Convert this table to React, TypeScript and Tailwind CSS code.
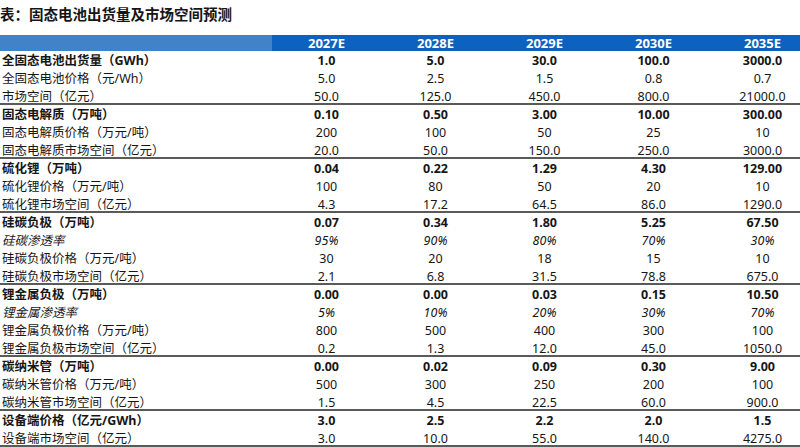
import React from "react";

type Row = { label: string; values: string[]; bold?: boolean; italic?: boolean };

const groups: Row[][] = [
  [
    { label: "全固态电池出货量（GWh）", values: ["1.0", "5.0", "30.0", "100.0", "3000.0"], bold: true },
    { label: "全固态电池价格（元/Wh）", values: ["5.0", "2.5", "1.5", "0.8", "0.7"] },
    { label: "市场空间（亿元）", values: ["50.0", "125.0", "450.0", "800.0", "21000.0"] },
  ],
  [
    { label: "固态电解质（万吨）", values: ["0.10", "0.50", "3.00", "10.00", "300.00"], bold: true },
    { label: "固态电解质价格（万元/吨）", values: ["200", "100", "50", "25", "10"] },
    { label: "固态电解质市场空间（亿元）", values: ["20.0", "50.0", "150.0", "250.0", "3000.0"] },
  ],
  [
    { label: "硫化锂（万吨）", values: ["0.04", "0.22", "1.29", "4.30", "129.00"], bold: true },
    { label: "硫化锂价格（万元/吨）", values: ["100", "80", "50", "20", "10"] },
    { label: "硫化锂市场空间（亿元）", values: ["4.3", "17.2", "64.5", "86.0", "1290.0"] },
  ],
  [
    { label: "硅碳负极（万吨）", values: ["0.07", "0.34", "1.80", "5.25", "67.50"], bold: true },
    { label: "硅碳渗透率", values: ["95%", "90%", "80%", "70%", "30%"], italic: true },
    { label: "硅碳负极价格（万元/吨）", values: ["30", "20", "18", "15", "10"] },
    { label: "硅碳负极市场空间（亿元）", values: ["2.1", "6.8", "31.5", "78.8", "675.0"] },
  ],
  [
    { label: "锂金属负极（万吨）", values: ["0.00", "0.00", "0.03", "0.15", "10.50"], bold: true },
    { label: "锂金属渗透率", values: ["5%", "10%", "20%", "30%", "70%"], italic: true },
    { label: "锂金属负极价格（万元/吨）", values: ["800", "500", "400", "300", "100"] },
    { label: "锂金属负极市场空间（亿元）", values: ["0.2", "1.3", "12.0", "45.0", "1050.0"] },
  ],
  [
    { label: "碳纳米管（万吨）", values: ["0.00", "0.02", "0.09", "0.30", "9.00"], bold: true },
    { label: "碳纳米管价格（万元/吨）", values: ["500", "300", "250", "200", "100"] },
    { label: "碳纳米管市场空间（亿元）", values: ["1.5", "4.5", "22.5", "60.0", "900.0"] },
  ],
  [
    { label: "设备端价格（亿元/GWh）", values: ["3.0", "2.5", "2.2", "2.0", "1.5"], bold: true },
    { label: "设备端市场空间（亿元）", values: ["3.0", "10.0", "55.0", "140.0", "4275.0"] },
  ],
];

const years = ["2027E", "2028E", "2029E", "2030E", "2035E"];

function DataRow({ row, last }: { row: Row; last: boolean }) {
  const weight = row.bold ? "font-bold" : "font-normal";
  const style = row.italic ? "italic" : "not-italic";
  const border = last ? "border-b-2 border-[#5a5a5a]" : "";
  return (
    <div className={`grid grid-cols-[272px_repeat(5,109px)] h-[18px] text-[#161616] ${border}`}>
      <div className={`flex items-center pl-[2px] pt-[1px] text-[12.5px] leading-[17px] ${weight} ${style}`}>{row.label}</div>
      {row.values.map((v, i) => (
        <div key={i} className={`flex items-center justify-center pt-[1px] text-[12.5px] leading-[17px] ${weight} ${style}`}>
          {v}
        </div>
      ))}
    </div>
  );
}

export default function App() {
  return (
    <div
      className="w-[800px] h-[447px] overflow-hidden bg-white text-[#161616]"
      style={{ fontFamily: '"Noto Sans", "Noto Sans CJK SC", sans-serif' }}
    >
      <div className="w-[818px]">
        <div className="h-[30px] flex items-center text-[14.5px] font-bold">
          表：固态电池出货量及市场空间预测
        </div>
        <div className="mt-[5px] grid grid-cols-[272px_repeat(5,109px)] h-[16px] text-[13px] font-bold text-white">
          <div className="bg-[#4182c8]" />
          {years.map((y) => (
            <div key={y} className="bg-[#0c62be] flex items-center justify-center leading-[16px]">
              {y}
            </div>
          ))}
        </div>
        <div>
          {groups.map((g, gi) =>
            g.map((r, ri) => <DataRow key={`${gi}-${ri}`} row={r} last={ri === g.length - 1} />)
          )}
        </div>
      </div>
    </div>
  );
}
